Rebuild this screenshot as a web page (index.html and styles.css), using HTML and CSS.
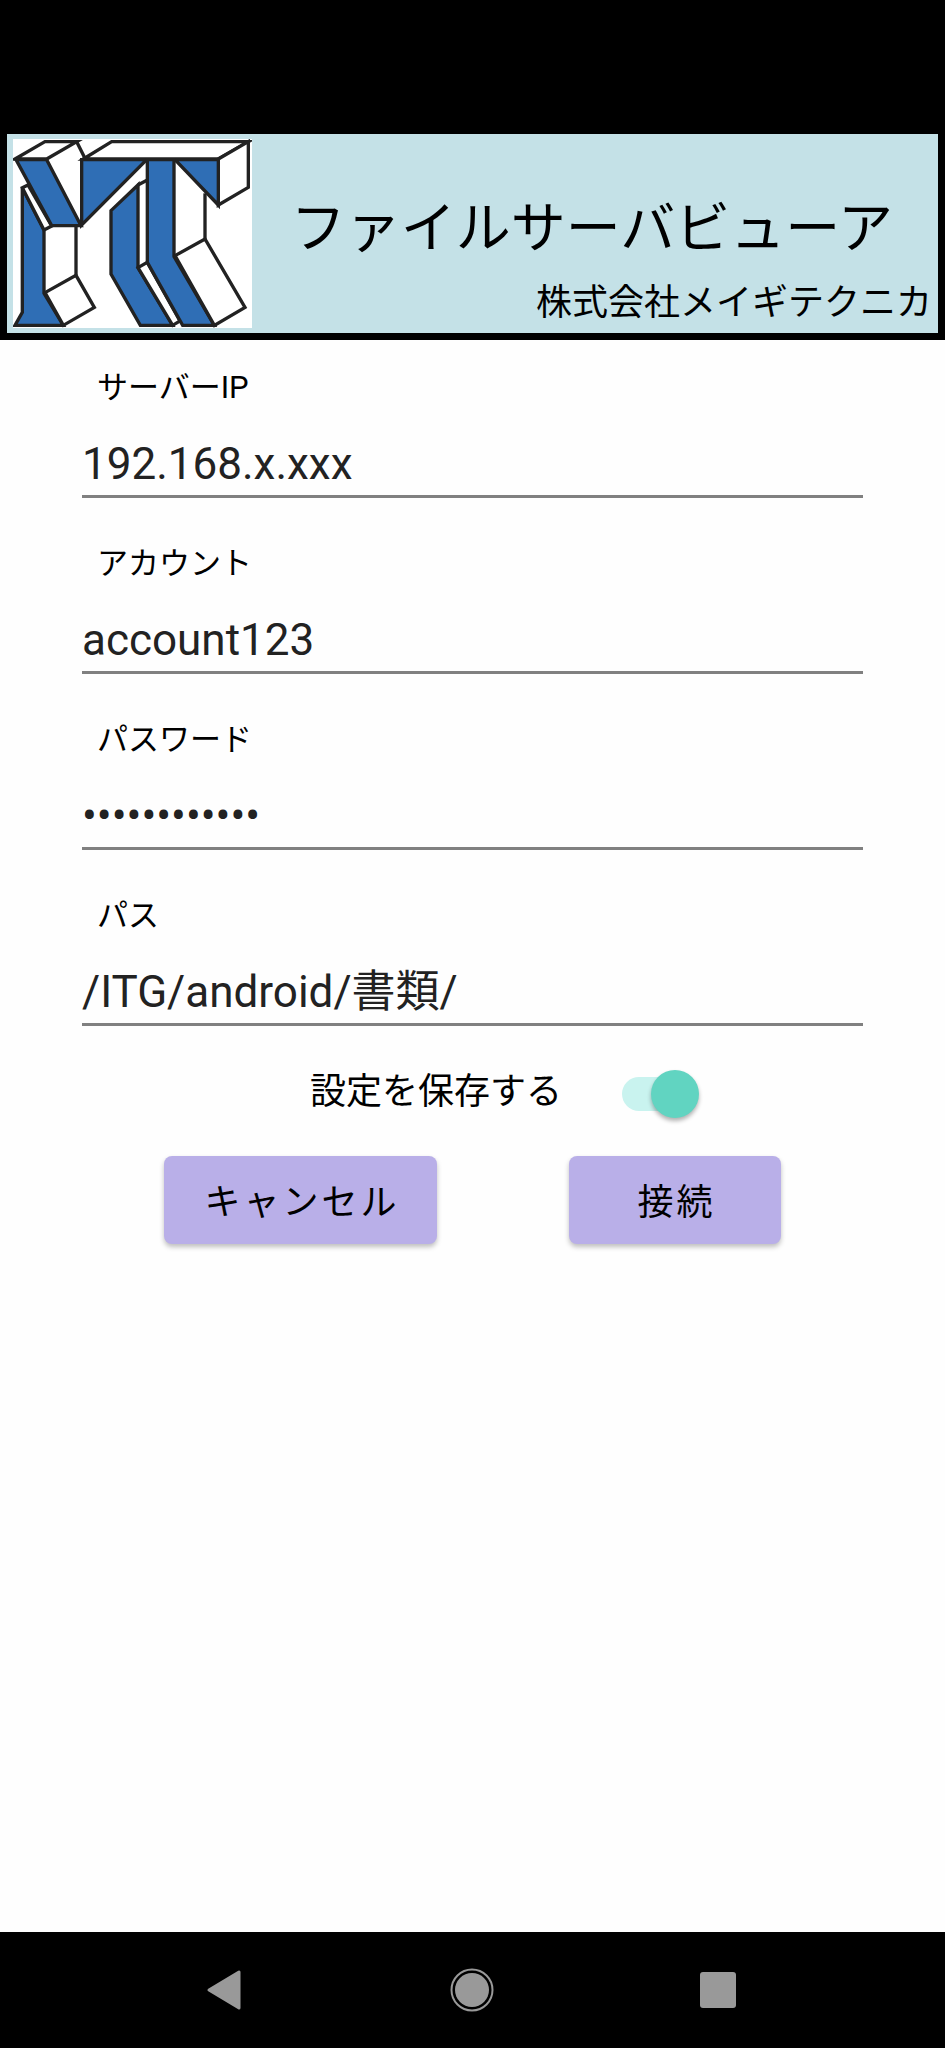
FILE: index.html
```
<!DOCTYPE html>
<html lang="ja">
<head>
    <meta charset="utf-8" />
    <title>ファイルサーバビューア</title>
    <meta name="viewport" content="width=device-width, initial-scale=1">
    <link rel="stylesheet" href="styles.css">
</head>
<body>
    <div class="screen">
        <div class="statusbar"></div>
        <header class="header">
            <svg class="logo" viewBox="39 42 717 567" role="img" aria-label="MT">
                <rect class="paper" x="39" y="42" width="717" height="567"/>
                <!-- M -->
                <path class="blue" d="M67 188 L132 315 V505 L190 601 H45 L67 562 Z"/>
                <path class="white" d="M45 102 L135 50 H230 L140 102 Z"/>
                <path class="line" d="M230 50 L256 102"/>
                <path class="white" d="M67 188 L84 180 L155 303 L132 315 Z"/>
                <path class="blue" d="M48 104 H140 L243 302 H155 Z"/>
                <path class="line" d="M228 302 V450"/>
                <path class="white" d="M135 503 L228 451 L283 547 L190 601 Z"/>
                <!-- T -->
                <path class="white" d="M250 102 L335 50 H745 L655 102 Z"/>
                <path class="white" d="M655 102 L745 50 V187 L655 240 Z"/>
                <path class="blue" d="M245 104 H440 L245 300 Z"/>
                <path class="blue" d="M525 104 H655 V240 Z"/>
                <path class="blue" d="M333 257 L414 180 V428 L518 601 H421 L333 447 Z"/>
                <path class="line" d="M414 180 L442 165"/>
                <path class="white" d="M414 428 L442 412 L540 588 L518 601 Z"/>
                <path class="blue" d="M442 104 H522 V395 L643 601 H548 L442 412 Z"/>
                <path class="line" d="M615 205 V342"/>
                <path class="white" d="M525 392 L615 342 L735 547 L643 601 Z"/>
            </svg>
            <div class="heading">
                <h1>ファイルサーバビューア</h1>
                <p>株式会社メイギテクニカ</p>
            </div>
        </header>

        <form class="form">
            <div class="field">
                <label for="ip">サーバーIP</label>
                <input type="text" id="ip" value="192.168.x.xxx"/>
            </div>
            <div class="field">
                <label for="account">アカウント</label>
                <input type="text" id="account" value="account123"/>
            </div>
            <div class="field">
                <label for="password">パスワード</label>
                <input type="password" id="password" value="password1234"/>
            </div>
            <div class="field">
                <label for="path">パス</label>
                <input type="text" id="path" class="kanji" value="/ITG/android/書類/"/>
            </div>
            <div class="save">
                <label for="save">設定を保存する</label>
                <input type="checkbox" class="switch" id="save" checked/>
            </div>
            <div class="buttons">
                <button type="button" class="cancel">キャンセル</button>
                <button type="submit" class="connect">接続</button>
            </div>
        </form>

        <nav class="navbar">
            <button type="button" aria-label="戻る">
                <svg viewBox="0 0 44 44"><path d="M34 4 V40 L4 22 Z" stroke="#999" stroke-width="3" stroke-linejoin="round"/></svg>
            </button>
            <button type="button" aria-label="ホーム">
                <svg viewBox="0 0 44 44"><circle cx="22" cy="22" r="17"/><circle cx="22" cy="22" r="20.5" fill="none" stroke="#999" stroke-width="2"/></svg>
            </button>
            <button type="button" aria-label="履歴">
                <svg viewBox="0 0 44 44"><rect x="4" y="4" width="36" height="36" rx="3"/></svg>
            </button>
        </nav>
    </div>
</body>
</html>
```
FILE: styles.css
```
*{
    margin: 0;
    padding: 0;
    box-sizing: border-box;
}
body{
    background: #fefefe;
    color: #000;
    font-family: Roboto, "Noto Sans CJK JP", sans-serif;
}
.screen{
    display: flex;
    flex-direction: column;
    min-height: 100vh;
}
.statusbar{
    height: 127px;
    background: #000;
}

/* header */
.header{
    display: flex;
    padding: 5px 6px;
    border: 7px solid #000;
    background: #c4e1e7;
}
.logo{
    flex: none;
    width: 239px;
    height: 189px;
}
.logo path{
    stroke: #222;
    stroke-width: 10;
}
.logo .blue{
    fill: #2f6eb5;
}
.logo .white, .logo .paper{
    fill: #fff;
}
.logo .line{
    fill: none;
}
.heading{
    flex: 1;
    display: flex;
    flex-direction: column;
    justify-content: flex-end;
}
.heading h1{
    font-size: 55px;
    font-weight: normal;
    line-height: 80px;
    text-align: center;
}
.heading p{
    margin-top: 10px;
    font-size: 36px;
    line-height: 50px;
    text-align: right;
}

/* form */
.form{
    flex: 1;
    padding: 26px 82px;
}
.field{
    margin-bottom: 44px;
}
.field label{
    display: block;
    padding-left: 15px;
    font-size: 31px;
    line-height: 44px;
}
.field input{
    display: block;
    width: 100%;
    height: 68px;
    margin-top: 20px;
    padding-top: 2px;
    border: 0;
    border-bottom: 3px solid #808080;
    background: none;
    color: #222;
    font-family: inherit;
    font-size: 44px;
    outline: none;
}
/* kanji make the line taller, keep the baseline of the other fields */
.field .kanji{
    padding: 0 0 6px;
}
.save{
    display: flex;
    align-items: flex-start;
    justify-content: center;
    gap: 60px;
    padding-left: 64px;
    font-size: 36px;
    line-height: 44px;
}
.switch{
    position: relative;
    width: 77px;
    height: 48px;
    appearance: none;
}
.switch::before{
    content: "";
    position: absolute;
    top: 7px;
    left: 0;
    width: 70px;
    height: 34px;
    border-radius: 17px;
    background: #c9f3ef;
}
.switch::after{
    content: "";
    position: absolute;
    top: 0;
    left: 0;
    width: 48px;
    height: 48px;
    border-radius: 50%;
    background: #61d4c1;
    box-shadow: 0 3px 4px rgba(0, 0, 0, .3);
}
.switch:checked::after{
    left: auto;
    right: 0;
}
.buttons{
    display: flex;
    justify-content: center;
    gap: 132px;
    margin-top: 38px;
}
.buttons button{
    height: 88px;
    padding: 0 0 3px 3px;
    border: 0;
    border-radius: 8px;
    background: #b9afe8;
    box-shadow: 0 3px 5px rgba(0, 0, 0, .25);
    color: #000;
    font-family: inherit;
    font-size: 36px;
    letter-spacing: 3px;
}
.buttons .cancel{
    width: 273px;
}
.buttons .connect{
    width: 212px;
}

/* android navigation */
.navbar{
    display: flex;
    padding: 0 11%;
    background: #000;
}
.navbar button{
    flex: 1;
    display: flex;
    align-items: center;
    justify-content: center;
    height: 116px;
    border: 0;
    background: none;
}
.navbar svg{
    width: 44px;
    height: 44px;
    fill: #999;
}
```
